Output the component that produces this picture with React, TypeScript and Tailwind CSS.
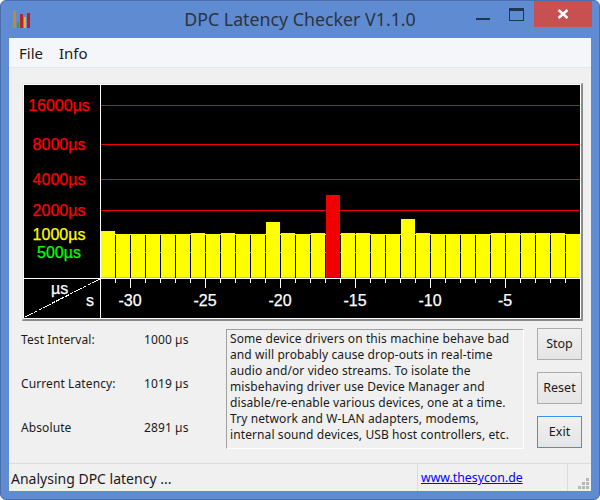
import React from "react";

const tops = [231,234,234,234,234,234,233,234,233,234,234,222,233,234,233,195,233,233,234,234,219,233,234,234,234,234,233,233,233,233,233,234];

const labels: [string, number, string][] = [
  ["16000µs", 111, "#ff0000"],
  ["8000µs", 150, "#ff0000"],
  ["4000µs", 185, "#ff0000"],
  ["2000µs", 216, "#ff0000"],
  ["1000µs", 240, "#ffff00"],
  ["500µs", 258, "#00ff00"],
];

function Chart() {
  return (
    <svg width={556} height={233} viewBox="24 85 556 233" className="block" shapeRendering="crispEdges">
      <rect x={24} y={85} width={556} height={233} fill="#000" />
      <g fill="#fff">
        <rect x={100} y={85} width={1} height={233} />
        <rect x={24} y={278} width={556} height={1} />
      </g>
      {[105, 144, 179, 210].map((y) => (
        <rect key={y} x={101} y={y} width={480} height={1} fill="#f00000" />
      ))}
      <rect x={101} y={234} width={480} height={1} fill="#ffff00" />
      <rect x={101} y={252} width={480} height={1} fill="#00e000" />
      {tops.map((t, i) => (
        <g key={i}>
          <rect x={101 + 15 * i} y={t} width={14} height={278 - t} fill={i === 15 ? "#f00000" : "#ffff00"} />
          <rect x={101 + 15 * i} y={277} width={14} height={1} fill={i === 15 ? "#c80000" : "#d8d800"} />
          <rect x={115 + 15 * i} y={279} width={1} height={i % 5 === 1 ? 9 : 4} fill="#fff" />
        </g>
      ))}
      <g fontFamily="'Liberation Sans', sans-serif" fontSize={16} shapeRendering="auto" strokeWidth={0.25}>
        {labels.map(([l, y, c]) => (
          <text key={l} x={59} y={y} textAnchor="middle" fill={c} stroke={c}>{l}</text>
        ))}
        <g fill="#fff" stroke="#fff">
          <text x={51} y={294}>µs</text>
          <text x={86} y={306}>s</text>
          {([["-30", 130], ["-25", 205], ["-20", 280], ["-15", 355], ["-10", 430], ["-5", 505]] as [string, number][]).map(([l, x]) => (
            <text key={l} x={x} y={306} textAnchor="middle">{l}</text>
          ))}
        </g>
      </g>
      <line x1={25} y1={317} x2={100} y2={279} stroke="#fff" strokeDasharray="4 1" />
    </svg>
  );
}

function Btn({ label, focus }: { label: string; focus?: boolean }) {
  return (
    <div className={`flex h-8 w-[45px] items-center justify-center border bg-gradient-to-b from-[#f0f0f0] to-[#e5e5e5] pt-[1px] text-[12.5px] text-[#1a1a1a] ${focus ? "border-[#3c94e8]" : "border-[#acacac]"}`}>
      {label}
    </div>
  );
}

function Row({ a, b }: { a: string; b: string }) {
  return (
    <div className="flex tracking-[0.1px]">
      <span className="w-[123px]">{a}</span>
      <span>{b}</span>
    </div>
  );
}

export default function App() {
  return (
    <div className="flex h-[500px] w-[600px] flex-col overflow-hidden rounded-[6px] border border-[#4a6ea8] bg-[#5f8bd3] font-['Noto_Sans',sans-serif] text-[#1a1a1a]">
      <div className="relative flex h-[37px] shrink-0 items-center justify-center">
        <svg className="absolute left-[11px] top-[9px] opacity-90" width="20" height="20" viewBox="0 0 20 20" shapeRendering="crispEdges">
          <rect x="1" y="1" width="3" height="17" fill="#d08a10" />
          <rect x="5" y="12" width="2" height="6" fill="#3f9d2a" />
          <rect x="8" y="4" width="3" height="14" fill="#c81818" />
          <rect x="12" y="7" width="2" height="11" fill="#e2c020" />
          <rect x="15" y="3" width="3" height="15" fill="#cc1010" />
        </svg>
        <span className="text-[17.8px] leading-none text-[#2b3440]">DPC Latency Checker V1.1.0</span>
        <div className="absolute left-[475px] top-[17px] h-[2px] w-[14px] bg-[#23364f]" />
        <div className="absolute left-[508px] top-[7px] h-[13px] w-[15px] border border-t-[3px] border-[#23364f]" />
        <div className="absolute left-[533px] top-0 flex h-[26px] w-[58px] items-center justify-center bg-[#c75050]">
          <svg width="12" height="12" viewBox="0 0 12 12"><path d="M1.5 2 L10.5 10 M10.5 2 L1.5 10" stroke="#fff" strokeWidth="2.4" /></svg>
        </div>
      </div>
      <div className="mx-[8px] flex min-h-0 flex-1 flex-col bg-[#f0f0f0]">
        <div className="flex h-[30px] shrink-0 items-center gap-[16px] border-b border-[#e6e7ea] bg-[#f5f6f9] pl-[10px] pt-[1px] text-[15px]">
          <span>File</span>
          <span>Info</span>
        </div>
        <div className="ml-[13px] mt-[15px] w-[561px] shrink-0 border-b-2 border-l border-r-2 border-t border-b-[#8a8a8a] border-l-[#e2e2e2] border-r-[#8a8a8a] border-t-[#e2e2e2]">
          <div className="border border-white">
            <Chart />
          </div>
        </div>
        <div className="mt-[8px] flex flex-1 text-[12px]">
          <div className="ml-[12px] flex w-[205px] flex-col gap-[26px] pt-[2px] leading-[18px]">
            <Row a="Test Interval:" b="1000 µs" />
            <Row a="Current Latency:" b="1019 µs" />
            <Row a="Absolute" b="2891 µs" />
          </div>
          <div className="h-[120px] w-[298px] whitespace-nowrap border border-b-white border-l-[#a0a0a0] border-r-white border-t-[#a0a0a0] py-[1px] pl-[3px] leading-[16px] tracking-[0.1px]">
            Some device drivers on this machine behave bad<br />
            and will probably cause drop-outs in real-time<br />
            audio and/or video streams. To isolate the<br />
            misbehaving driver use Device Manager and<br />
            disable/re-enable various devices, one at a time.<br />
            Try network and W-LAN adapters, modems,<br />
            internal sound devices, USB host controllers, etc.
          </div>
          <div className="ml-[13px] -mt-[1px] flex flex-col gap-[12px]">
            <Btn label="Stop" />
            <Btn label="Reset" />
            <Btn label="Exit" focus />
          </div>
        </div>
        <div className="flex h-[28px] shrink-0 items-center border-t border-[#dcdcdc] text-[14px]">
          <span className="w-[408px] pl-[2px] pt-[1px]">Analysing DPC latency ...</span>
          <div className="flex h-full w-[150px] items-center border-l border-[#dcdcdc] pl-[3px] pt-[2px] text-[12.3px] text-[#0000ff] underline">www.thesycon.de</div>
          <div className="flex h-full flex-1 items-end justify-end border-l border-[#dcdcdc] pb-[2px] pr-[2px]">
            <svg width="11" height="11" viewBox="0 0 11 11" shapeRendering="crispEdges" fill="#b8b8b8">
              <rect x="8" y="0" width="3" height="3" />
              <rect x="4" y="4" width="3" height="3" />
              <rect x="8" y="4" width="3" height="3" />
              <rect x="0" y="8" width="3" height="3" />
              <rect x="4" y="8" width="3" height="3" />
              <rect x="8" y="8" width="3" height="3" />
            </svg>
          </div>
        </div>
      </div>
      <div className="h-[8px] shrink-0" />
    </div>
  );
}
